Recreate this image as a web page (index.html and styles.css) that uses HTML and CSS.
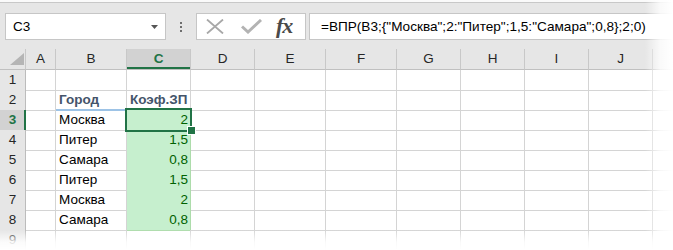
FILE: index.html
```html
<!DOCTYPE html>
<html lang="ru">
<head>
    <meta charset="UTF-8">
    <title>ВПР</title>
    <link rel="stylesheet" href="styles.css">
</head>
<body>
    <div id="app">
        <div class="toolbar">
            <div class="namebox">
                <span>C3</span>
                <svg class="drop" width="7" height="4" viewBox="0 0 7 4"><path d="M0 0h7L3.5 4z" fill="#555"/></svg>
            </div>
            <div class="grip"><i></i><i></i><i></i></div>
            <div class="fx-buttons">
                <svg class="btn-x" width="18" height="15" viewBox="0 0 18 15"><path d="M1 0.5L17 14.5M17 0.5L1 14.5" stroke="#a8a8a8" stroke-width="1.8" fill="none"/></svg>
                <svg class="btn-ok" width="21" height="15" viewBox="0 0 21 15"><path d="M1 7.5L7 13L20 1" stroke="#b3b3b3" stroke-width="3" fill="none"/></svg>
                <span class="fx">fx</span>
            </div>
            <div class="formula">=ВПР(B3;{"Москва";2:"Питер";1,5:"Самара";0,8};2;0)</div>
        </div>

        <div class="sheet">
            <div class="row head">
                <div class="corner"><svg width="14" height="12" viewBox="0 0 14 12"><path d="M14 0V12H0z" fill="#b5b5b5"/></svg></div>
                <div>A</div><div>B</div><div class="sel">C</div><div>D</div><div>E</div><div>F</div><div>G</div><div>H</div><div>I</div><div>J</div><div></div>
            </div>
            <div class="row">
                <div class="num">1</div><div></div><div></div><div></div><div></div><div></div><div></div><div></div><div></div><div></div><div></div><div></div>
            </div>
            <div class="row">
                <div class="num">2</div><div></div><div class="title">Город</div><div class="title">Коэф.ЗП</div><div></div><div></div><div></div><div></div><div></div><div></div><div></div><div></div>
            </div>
            <div class="row">
                <div class="num sel">3</div><div></div><div class="city">Москва</div><div class="good active">2</div><div></div><div></div><div></div><div></div><div></div><div></div><div></div><div></div>
            </div>
            <div class="row">
                <div class="num">4</div><div></div><div class="city">Питер</div><div class="good">1,5</div><div></div><div></div><div></div><div></div><div></div><div></div><div></div><div></div>
            </div>
            <div class="row">
                <div class="num">5</div><div></div><div class="city">Самара</div><div class="good">0,8</div><div></div><div></div><div></div><div></div><div></div><div></div><div></div><div></div>
            </div>
            <div class="row">
                <div class="num">6</div><div></div><div class="city">Питер</div><div class="good">1,5</div><div></div><div></div><div></div><div></div><div></div><div></div><div></div><div></div>
            </div>
            <div class="row">
                <div class="num">7</div><div></div><div class="city">Москва</div><div class="good">2</div><div></div><div></div><div></div><div></div><div></div><div></div><div></div><div></div>
            </div>
            <div class="row">
                <div class="num">8</div><div></div><div class="city">Самара</div><div class="good">0,8</div><div></div><div></div><div></div><div></div><div></div><div></div><div></div><div></div>
            </div>
            <div class="row">
                <div class="num">9</div><div></div><div></div><div></div><div></div><div></div><div></div><div></div><div></div><div></div><div></div><div></div>
            </div>
        </div>

        <!-- рваный край скриншота -->
        <div class="fade-right"></div>
        <div class="fade-bottom"></div>
    </div>
</body>
</html>
```

FILE: styles.css
```css
* {
    box-sizing: border-box;
}
body {
    margin: 0;
    background: #fff;
    font-family: "Liberation Sans", Arial, sans-serif;
}
#app {
    position: relative;
    width: 673px;
    height: 250px;
    overflow: hidden;
}
.toolbar {
    height: 49px;
    background: #e6e6e6;
    border-top: 2px solid #fafafa;
    box-shadow: inset 0 1px 0 #c8c8c8;
    display: flex;
    align-items: flex-start;
    padding-top: 11px;
}
.namebox {
    margin-left: 5px;
    width: 161px;
    height: 27px;
    background: #fff;
    border: 1px solid #c6c6c6;
    display: flex;
    align-items: center;
    padding-left: 7px;
    font-size: 13.5px;
    color: #000;
}
.namebox span {
    flex: 1;
}
.namebox .drop {
    margin-right: 7px;
}
.grip {
    margin-left: 14px;
    width: 2px;
    height: 27px;
    display: flex;
    flex-direction: column;
    justify-content: center;
    gap: 2px;
}
.grip i {
    display: block;
    width: 2px;
    height: 2px;
    background: #6e6e6e;
}
.fx-buttons {
    margin-left: 14px;
    width: 110px;
    height: 27px;
    background: #fff;
    border: 1px solid #c6c6c6;
    display: flex;
    align-items: center;
    padding-left: 9px;
}
.btn-ok {
    margin-left: 17px;
}
.fx {
    margin-left: 14px;
    font-family: "Liberation Serif", "DejaVu Serif", serif;
    font-style: italic;
    font-weight: bold;
    font-size: 22px;
    color: #4a4a4a;
    letter-spacing: -1px;
    line-height: 20px;
    margin-top: -2px;
}
.formula {
    margin-left: 3px;
    flex: 1;
    height: 27px;
    background: #fff;
    border: 1px solid #c6c6c6;
    border-right: 0;
    padding-left: 11px;
    font-size: 13.6px;
    line-height: 25px;
    color: #000;
    white-space: nowrap;
}
.row {
    display: grid;
    grid-template-columns: 26px 30px 71px 64px 64px 71px 71px 64px 64px 64px 64px 40px;
    height: 20px;
}
.row > div {
    border-right: 1px solid #d4d4d4;
    border-bottom: 1px solid #d4d4d4;
    font-size: 13.5px;
    line-height: 20px;
    white-space: nowrap;
    padding: 0 3px;
    overflow: visible;
}
.row.head {
    height: 21px;
}
.row.head > div {
    background: #e6e6e6;
    border-right-color: #c8c8c8;
    border-bottom-color: #c0c0c0;
    text-align: center;
    font-size: 13.5px;
    color: #262626;
}
.row.head > div.sel {
    background: #d2d2d2;
    color: #217346;
    font-weight: bold;
    box-shadow: inset 0 -2px 0 #217346;
}
.row.head .corner {
    padding: 4px 0 0 10px;
    text-align: left;
    line-height: 0;
}
.row > div.num {
    background: #e6e6e6;
    border-right-color: #bcbcbc;
    border-bottom-color: #cfcfcf;
    text-align: center;
    font-size: 13.5px;
    color: #262626;
    padding: 0;
}
.row > div.num.sel {
    background: #d2d2d2;
    color: #217346;
    font-weight: bold;
    border-right-color: #217346;
    box-shadow: inset -1px 0 0 #217346;
}
.row > div.title {
    font-weight: bold;
    color: #44546a;
    border-bottom-color: #9dc3e6;
    box-shadow: inset 0 -1px 0 #9dc3e6;
}
.row > div.good {
    background: #c6efce;
    color: #006100;
    text-align: right;
    padding-right: 2px;
    border-color: #addcab;
}
.active {
    position: relative;
}
.active::after {
    content: "";
    position: absolute;
    left: -2px;
    top: -2px;
    right: -2px;
    bottom: -2px;
    border: 2px solid #217346;
}
.active::before {
    content: "";
    position: absolute;
    left: 60px;
    top: 16px;
    width: 7px;
    height: 7px;
    background: #217346;
    border: 1px solid #fff;
    z-index: 2;
}
.fade-right {
    position: absolute;
    top: 0;
    right: 0;
    width: 28px;
    height: 250px;
    background: linear-gradient(to right, rgba(255, 255, 255, 0), rgba(255, 255, 255, 0.8) 55%, #fff);
}
.fade-bottom {
    position: absolute;
    left: 0;
    bottom: 0;
    width: 673px;
    height: 20px;
    background: linear-gradient(to bottom, rgba(255, 255, 255, 0), rgba(255, 255, 255, 0.85) 60%, #fff);
}
```
